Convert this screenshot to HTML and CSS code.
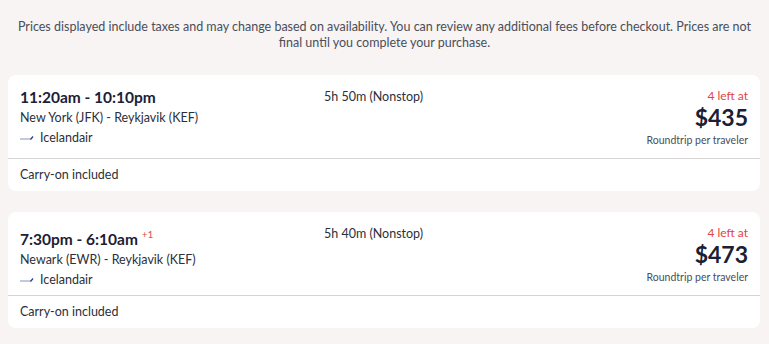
FILE: index.html
```html
<!DOCTYPE html>
<html lang="en">
<head>
    <meta charset="UTF-8">
    <meta name="viewport" content="width=device-width, initial-scale=1.0">
    <title>Flights</title>
    <link rel="stylesheet" href="styles.css">
</head>
<body>
    <p class="notice">Prices displayed include taxes and may change based on availability. You can review any additional fees before checkout. Prices are not final until you complete your purchase.</p>

    <div class="results">
        <!-- JFK -->
        <div class="card">
            <div class="card-main">
                <div class="info">
                    <div class="times">11:20am - 10:10pm</div>
                    <div class="route">New York (JFK) - Reykjavik (KEF)</div>
                    <div class="airline">
                        <svg class="airline-logo" width="14" height="6" viewBox="0 0 14 6"><path d="M0 4h11" stroke="#7c86b4" stroke-width="0.9"/><path d="M10.5 4.5l2.5-3" stroke="#2e3d8c" stroke-width="1.3"/></svg>
                        Icelandair
                    </div>
                </div>
                <div class="duration">5h 50m (Nonstop)</div>
                <div class="price">
                    <div class="left">4 left at</div>
                    <div class="amount">$435</div>
                    <div class="per">Roundtrip per traveler</div>
                </div>
            </div>
            <div class="card-foot">Carry-on included</div>
        </div>

        <!-- EWR -->
        <div class="card">
            <div class="card-main">
                <div class="info">
                    <div class="times">7:30pm - 6:10am <sup class="plus">+1</sup></div>
                    <div class="route">Newark (EWR) - Reykjavik (KEF)</div>
                    <div class="airline">
                        <svg class="airline-logo" width="14" height="6" viewBox="0 0 14 6"><path d="M0 4h11" stroke="#7c86b4" stroke-width="0.9"/><path d="M10.5 4.5l2.5-3" stroke="#2e3d8c" stroke-width="1.3"/></svg>
                        Icelandair
                    </div>
                </div>
                <div class="duration">5h 40m (Nonstop)</div>
                <div class="price">
                    <div class="left">4 left at</div>
                    <div class="amount">$473</div>
                    <div class="per">Roundtrip per traveler</div>
                </div>
            </div>
            <div class="card-foot">Carry-on included</div>
        </div>
    </div>
</body>
</html>
```

FILE: styles.css
```css
* {
    box-sizing: border-box;
    margin: 0;
    padding: 0;
    font-family: Lato, "Noto Sans", sans-serif;
}
body {
    background: #f7f4f3;
    color: #1c2236;
    padding: 19px 8px 0 8px;
}
.notice {
    font-size: 12.5px;
    line-height: 16px;
    color: #4a4e5a;
    text-align: center;
    padding: 0 4px;
}
.results {
    margin-top: 24px;
    display: flex;
    flex-direction: column;
    gap: 21px;
}
.card {
    background: #fff;
    border-radius: 8px;
    width: 752px;
}
.card-main {
    height: 84px;
    padding: 12px 12px 0 12px;
    display: grid;
    grid-template-columns: 304px 1fr auto;
    border-bottom: 1px solid #d6d3d2;
}
.times {
    font-size: 15.5px;
    font-weight: 700;
    line-height: 20px;
    color: #1b2034;
}
.plus {
    font-size: 10px;
    font-weight: 400;
    color: #d9534f;
    vertical-align: 7px;
}
.route {
    font-size: 12.5px;
    line-height: 20px;
    color: #2b2f3b;
    margin-top: 1px;
}
.airline {
    font-size: 12.5px;
    line-height: 20px;
    color: #2b2f3b;
    display: flex;
    align-items: center;
    gap: 6px;
}
.duration {
    font-size: 12.5px;
    line-height: 20px;
    color: #2b2f3b;
}
.price {
    text-align: right;
}
.left {
    font-size: 12px;
    line-height: 17px;
    color: #e04545;
}
.amount {
    font-size: 23px;
    font-weight: 700;
    line-height: 26px;
    color: #1b2034;
}
.per {
    font-size: 10.5px;
    line-height: 20px;
    color: #4a4e5a;
}
.card-foot {
    height: 32px;
    padding: 0 12px;
    font-size: 12.5px;
    line-height: 32px;
    color: #2b2f3b;
}
```
